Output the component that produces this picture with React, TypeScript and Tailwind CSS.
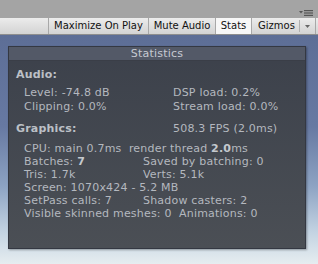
import React from 'react'

const toolbarButtons = [
  { name: 'Maximize On Play', width: 'w-[100px]', active: false },
  { name: 'Mute Audio', width: 'w-[67px]', active: false },
  { name: 'Stats', width: 'w-[36px]', active: true },
]

function PaneMenuIcon() {
  return (
    <svg width="14" height="6" viewBox="0 0 14 6" className="block">
      <path d="M0 1 L4 1 L2 3.5 Z" fill="#555" />
      <rect x="5" y="0" width="9" height="1.2" fill="#555" />
      <rect x="5" y="2.4" width="9" height="1.2" fill="#555" />
      <rect x="5" y="4.8" width="9" height="1.2" fill="#555" />
    </svg>
  )
}

export default function App() {
  return (
    <div className="w-[318px] h-[264px] overflow-hidden flex flex-col bg-[#a4a4a4] font-['DejaVu_Sans',sans-serif]">
      {/* top strip */}
      <div className="h-[18px] flex justify-end items-start pt-[10px] pr-[5px]">
        <PaneMenuIcon />
      </div>

      {/* scene toolbar */}
      <div className="h-[17px] flex bg-gradient-to-b from-[#ececec] to-[#d3d3d3] border-b border-[#8e8e8e] text-[10px] leading-[16px] text-[#111]">
        <div className="w-[49px] border-r border-[#a8a8a8]" />
        {toolbarButtons.map((btn) => (
          <div
            key={btn.name}
            className={`${btn.width} flex items-center justify-center border-r border-[#a8a8a8] ${
              btn.active ? 'bg-[#f7f7f7]' : ''
            }`}
          >
            {btn.name}
          </div>
        ))}
        <div className="w-[64px] flex items-center border-r border-[#a8a8a8]">
          <span className="pl-[6px] w-[47px]">Gizmos</span>
          <div className="h-[12px] border-l border-[#b0b0b0] flex-1 flex items-center justify-center">
            <svg width="5" height="3" viewBox="0 0 5 3">
              <path d="M0 0 L5 0 L2.5 3 Z" fill="#666" />
            </svg>
          </div>
        </div>
      </div>

      {/* scene view */}
      <div className="flex-1 pl-[8px] pt-[11px] bg-[linear-gradient(to_bottom,#5d6e96_0%,#6779a2_40%,#8da3c3_66%,#c3d3e2_86%,#e6edf0_100%)]">
        <div className="w-[298px] h-[203px] flex flex-col border border-[#343842] bg-gradient-to-b from-[#3c414b] to-[#4b4f55] shadow-[1px_1px_2px_rgba(0,0,0,0.35)] text-[11px] leading-[13px] tracking-[0.2px] text-[#b4b8bf]">
          <div className="h-[14px] shrink-0 bg-[#535967] border-b border-[#3a3e47] flex items-center justify-center text-[#c6cad2]">
            Statistics
          </div>

          <div className="pl-[7px] pt-[7px]">
            <div className="font-bold text-[#bcc0c6]">Audio:</div>
            <div className="mt-[5px] flex">
              <span className="w-[157px] pl-[8px]">Level: -74.8 dB</span>
              <span>DSP load: 0.2%</span>
            </div>
            <div className="mt-[1px] flex">
              <span className="w-[157px] pl-[8px]">Clipping: 0.0%</span>
              <span>Stream load: 0.0%</span>
            </div>

            <div className="mt-[9px] flex">
              <span className="w-[157px] font-bold text-[#bcc0c6]">Graphics:</span>
              <span>508.3 FPS (2.0ms)</span>
            </div>

            <div className="pl-[8px]">
              <div className="mt-[7px] whitespace-pre">
                CPU: main 0.7ms  render thread <b className="text-[#c4c8ce]">2.0</b>ms
              </div>
              <div className="flex">
                <span className="w-[119px]">
                  Batches: <b className="text-[#c4c8ce]">7</b>
                </span>
                <span>Saved by batching: 0</span>
              </div>
              <div className="flex">
                <span className="w-[119px]">Tris: 1.7k</span>
                <span>Verts: 5.1k</span>
              </div>
              <div>Screen: 1070x424 - 5.2 MB</div>
              <div className="flex">
                <span className="w-[119px]">SetPass calls: 7</span>
                <span>Shadow casters: 2</span>
              </div>
              <div className="whitespace-pre">Visible skinned meshes: 0  Animations: 0</div>
            </div>
          </div>
        </div>
      </div>
    </div>
  )
}
